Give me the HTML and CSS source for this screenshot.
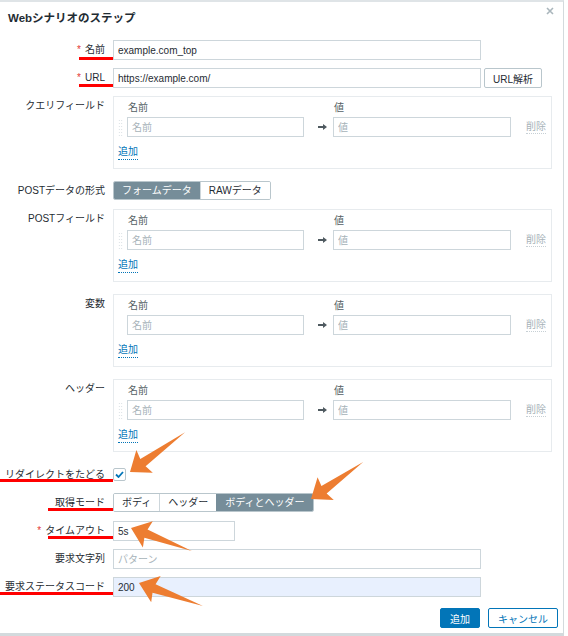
FILE: index.html
```html
<!DOCTYPE html>
<html lang="ja">
<head>
    <meta charset="UTF-8">
    <meta name="viewport" content="width=device-width, initial-scale=1.0">
    <title>Webシナリオのステップ</title>
    <link rel="stylesheet" href="styles.css">
</head>
<body>
    <div class="page">
        <div class="dialog">
            <div class="dialog-head">
                <h4 class="title">Webシナリオのステップ</h4>
                <span class="close">
                    <svg width="8" height="8" viewBox="0 0 8 8"><path d="M1 1L7 7M7 1L1 7" stroke="#aab6bc" stroke-width="1.6"/></svg>
                </span>
            </div>

            <div class="form">
                <label class="lbl"><span class="req">*</span>名前</label>
                <div class="ctl"><input class="text wide" type="text" value="example.com_top"></div>

                <label class="lbl"><span class="req">*</span>URL</label>
                <div class="ctl inline">
                    <input class="text wide" type="text" value="https://example.com/">
                    <button class="btn-alt">URL解析</button>
                </div>

                <div class="lbl">クエリフィールド</div>
                <div class="ctl">
                    <div class="pairs">
                        <div class="pairs-head"><span class="col-name">名前</span><span>値</span></div>
                        <div class="pair">
                            <span class="drag"></span>
                            <input class="text pair-name" type="text" placeholder="名前">
                            <span class="arrow"><svg width="9" height="6" viewBox="0 0 9 6"><path d="M0 2H5V0L9 3L5 6V4H0Z" fill="#4f5a60"/></svg></span>
                            <input class="text pair-value" type="text" placeholder="値">
                            <span class="remove">削除</span>
                        </div>
                        <a class="add">追加</a>
                    </div>
                </div>

                <div class="lbl">POSTデータの形式</div>
                <div class="ctl">
                    <div class="seg">
                        <span class="seg-item active">フォームデータ</span>
                        <span class="seg-item">RAWデータ</span>
                    </div>
                </div>

                <div class="lbl">POSTフィールド</div>
                <div class="ctl">
                    <div class="pairs">
                        <div class="pairs-head"><span class="col-name">名前</span><span>値</span></div>
                        <div class="pair">
                            <span class="drag"></span>
                            <input class="text pair-name" type="text" placeholder="名前">
                            <span class="arrow"><svg width="9" height="6" viewBox="0 0 9 6"><path d="M0 2H5V0L9 3L5 6V4H0Z" fill="#4f5a60"/></svg></span>
                            <input class="text pair-value" type="text" placeholder="値">
                            <span class="remove">削除</span>
                        </div>
                        <a class="add">追加</a>
                    </div>
                </div>

                <div class="lbl">変数</div>
                <div class="ctl">
                    <div class="pairs">
                        <div class="pairs-head"><span class="col-name">名前</span><span>値</span></div>
                        <div class="pair">
                            <span class="drag blank"></span>
                            <input class="text pair-name" type="text" placeholder="名前">
                            <span class="arrow"><svg width="9" height="6" viewBox="0 0 9 6"><path d="M0 2H5V0L9 3L5 6V4H0Z" fill="#4f5a60"/></svg></span>
                            <input class="text pair-value" type="text" placeholder="値">
                            <span class="remove">削除</span>
                        </div>
                        <a class="add">追加</a>
                    </div>
                </div>

                <div class="lbl">ヘッダー</div>
                <div class="ctl">
                    <div class="pairs">
                        <div class="pairs-head"><span class="col-name">名前</span><span>値</span></div>
                        <div class="pair">
                            <span class="drag"></span>
                            <input class="text pair-name" type="text" placeholder="名前">
                            <span class="arrow"><svg width="9" height="6" viewBox="0 0 9 6"><path d="M0 2H5V0L9 3L5 6V4H0Z" fill="#4f5a60"/></svg></span>
                            <input class="text pair-value" type="text" placeholder="値">
                            <span class="remove">削除</span>
                        </div>
                        <a class="add">追加</a>
                    </div>
                </div>

                <label class="lbl check-lbl">リダイレクトをたどる</label>
                <div class="ctl check-row">
                    <span class="checkbox">
                        <svg width="9" height="7" viewBox="0 0 9 7"><path d="M1 3.5L3.5 6L8 1" fill="none" stroke="#0275b8" stroke-width="1.8"/></svg>
                    </span>
                </div>

                <label class="lbl">取得モード</label>
                <div class="ctl">
                    <div class="seg">
                        <span class="seg-item">ボディ</span>
                        <span class="seg-item">ヘッダー</span>
                        <span class="seg-item active">ボディとヘッダー</span>
                    </div>
                </div>

                <label class="lbl"><span class="req">*</span>タイムアウト</label>
                <div class="ctl"><input class="text short" type="text" value="5s"></div>

                <label class="lbl">要求文字列</label>
                <div class="ctl"><input class="text wide" type="text" placeholder="パターン"></div>

                <label class="lbl">要求ステータスコード</label>
                <div class="ctl"><input class="text wide filled" type="text" value="200"></div>
            </div>

            <div class="footer">
                <button class="btn">追加</button>
                <button class="btn-outline">キャンセル</button>
            </div>
        </div>

        <!-- annotations drawn over the screenshot -->
        <svg class="marks" width="568" height="636" viewBox="0 0 568 636">
            <g fill="#ff0000">
                <rect x="79" y="57" width="34" height="3"/>
                <rect x="79" y="84" width="34" height="3"/>
                <rect x="0" y="479" width="113" height="3"/>
                <rect x="48" y="508" width="65" height="3"/>
                <rect x="48" y="536" width="65" height="3"/>
                <rect x="0" y="592" width="113" height="3"/>
            </g>
            <g fill="#ed7d31">
                <polygon points="0,0 -18,-14 -16,-4.5 -68,0 -16,4.5 -18,14" transform="translate(130 472) rotate(144.1)"/>
                <polygon points="0,0 -18,-14 -16,-4.5 -64,0 -16,4.5 -18,14" transform="translate(311 499) rotate(144.6)"/>
                <polygon points="0,0 -18,-14 -16,-4.5 -65,0 -16,4.5 -18,14" transform="translate(131 528) rotate(200.7)"/>
                <polygon points="0,0 -18,-14 -16,-4.5 -68,0 -16,4.5 -18,14" transform="translate(139 583) rotate(199.8)"/>
            </g>
        </svg>
    </div>
</body>
</html>
```

FILE: styles.css
```css
* {
    box-sizing: border-box;
}

body {
    margin: 0;
    background: #fff;
    font-family: "Liberation Sans", Arial, "Noto Sans CJK JP", sans-serif;
    font-size: 10px;
    color: #1f2c33;
}

.page {
    position: relative;
    width: 568px;
    height: 636px;
}

.dialog {
    width: 564px;
    height: 636px;
    background: #fff;
    border-top: 2px solid #dfe4e7;
    border-right: 1px solid #d3dadd;
    border-bottom: 3px solid #d3dadd;
}

.dialog-head {
    display: flex;
    justify-content: space-between;
    padding: 8px 6px 14px 8px;
}

.title {
    margin: 0;
    font-size: 11.5px;
    line-height: 16px;
    font-weight: bold;
}

.close {
    display: flex;
    margin-top: -3px;
    margin-right: 3px;
}

.form {
    display: grid;
    grid-template-columns: 105px 1fr;
    column-gap: 8px;
    row-gap: 8px;
}

.lbl {
    text-align: right;
    line-height: 20px;
    white-space: nowrap;
}

.req {
    color: #e33734;
    margin-right: 4px;
}

.ctl {
    display: flex;
    align-items: flex-start;
}

.inline {
    gap: 3px;
}

.text {
    height: 20px;
    padding: 0 4px;
    border: 1px solid #cdd6db;
    border-radius: 0;
    font: inherit;
    color: #1f2c33;
    background: #fff;
    outline: none;
}

.text::placeholder {
    color: #a7b3b9;
}

.wide {
    width: 368px;
}

.short {
    width: 122px;
}

.filled {
    background: #e8f0fe;
}

.btn-alt {
    height: 20px;
    padding: 0 8px;
    border: 1px solid #b9c6cc;
    border-radius: 2px;
    background: #fff;
    font: inherit;
    color: #1f2c33;
}

.pairs {
    width: 439px;
    height: 73px;
    margin-bottom: 4px;
    padding: 4px 5px 7px 4px;
    border: 1px solid #e7ebee;
}

.pairs-head {
    display: flex;
    height: 14px;
    line-height: 14px;
    padding-left: 10px;
    margin-bottom: 2px;
    color: #555f65;
}

.col-name {
    width: 206px;
}

.pair {
    display: flex;
    align-items: center;
}

.drag {
    width: 5px;
    height: 17px;
    margin-right: 4px;
    background-image: radial-gradient(circle, #d3dbdf 0.6px, transparent 0.8px);
    background-size: 2.5px 3px;
}

.drag.blank {
    background: none;
}

.pair-name {
    width: 177px;
}

.arrow {
    display: flex;
    width: 29px;
    padding-left: 14px;
}

.pair-value {
    width: 178px;
}

.remove {
    margin-left: 15px;
    color: #a7b3b9;
    line-height: 13px;
    border-bottom: 1px dotted #c7d0d5;
}

.add {
    display: inline-block;
    margin-top: 8px;
    line-height: 14px;
    color: #0275b8;
    border-bottom: 1px dotted #0275b8;
}

.seg {
    display: flex;
    height: 19px;
    border: 1px solid #b9c6cc;
    border-radius: 2px;
    overflow: hidden;
}

.seg-item {
    padding: 0 8px;
    line-height: 17px;
    border-left: 1px solid #cdd6db;
    background: #fff;
    color: #1f2c33;
}

.seg-item:first-child {
    border-left: none;
}

.seg-item.active {
    background: #768d99;
    border-left-color: #768d99;
    color: #fff;
}

.check-lbl {
    line-height: 21px;
}

.check-row {
    height: 21px;
    align-items: center;
}

.checkbox {
    display: flex;
    align-items: center;
    justify-content: center;
    width: 13px;
    height: 13px;
    border: 1px solid #b9c6cc;
    border-radius: 2px;
    background: #fff;
}

.footer {
    display: flex;
    justify-content: flex-end;
    gap: 8px;
    padding: 11px 5px 0 0;
}

.btn,
.btn-outline {
    height: 20px;
    padding: 0 9px;
    border: 1px solid #0275b8;
    border-radius: 2px;
    font: inherit;
}

.btn {
    background: #0275b8;
    color: #fff;
}

.btn-outline {
    background: #fff;
    color: #0275b8;
}

.marks {
    position: absolute;
    top: 0;
    left: 0;
    pointer-events: none;
}
```
